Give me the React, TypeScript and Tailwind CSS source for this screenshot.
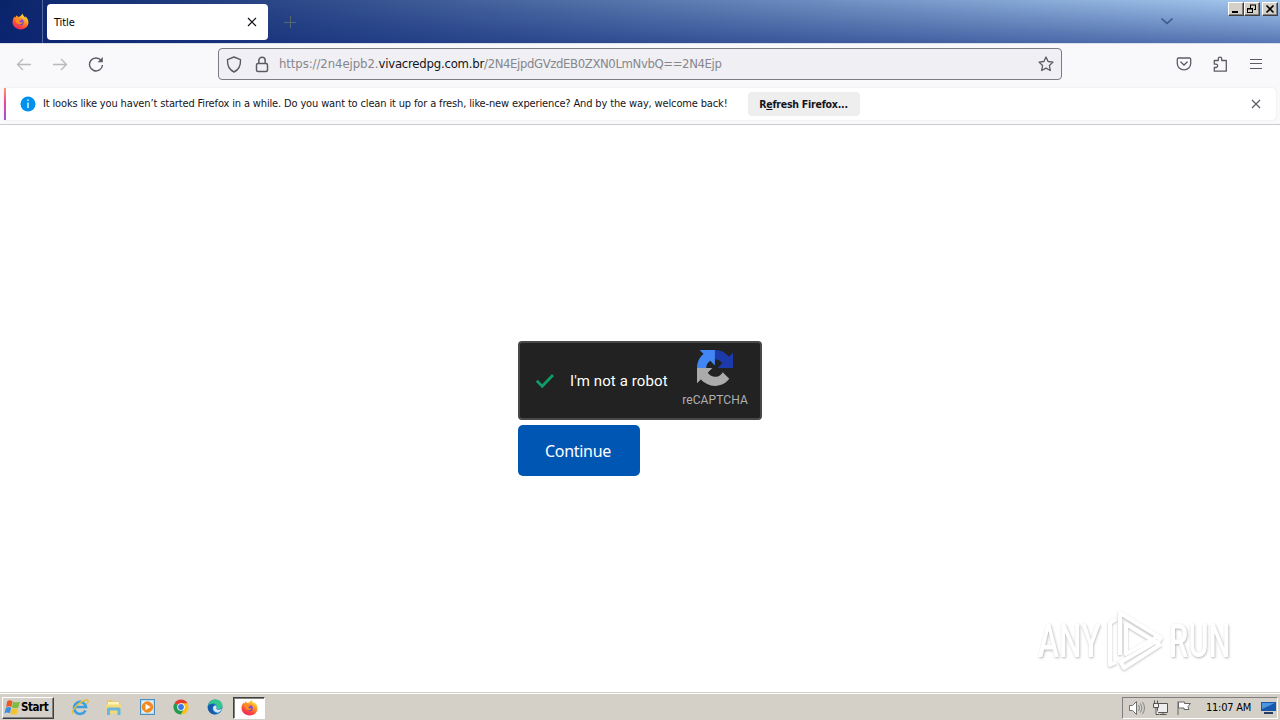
import type { ReactNode } from "react";

const uiFont = "font-['DejaVu_Sans_Condensed','DejaVu_Sans',sans-serif] [font-stretch:condensed]";

function FirefoxLogo({ size }: { size: number }) {
  return (
    <svg width={size} height={size} viewBox="0 0 32 32">
      <defs>
        <linearGradient id="fxBody" x1="0.8" y1="0" x2="0.25" y2="1">
          <stop offset="0" stopColor="#fff04a" />
          <stop offset="0.35" stopColor="#ffa524" />
          <stop offset="0.7" stopColor="#ff4b3a" />
          <stop offset="1" stopColor="#e82268" />
        </linearGradient>
        <linearGradient id="fxCore" x1="0" y1="0" x2="0" y2="1">
          <stop offset="0" stopColor="#9a50f5" />
          <stop offset="1" stopColor="#5b3cc0" />
        </linearGradient>
      </defs>
      <path
        fill="url(#fxBody)"
        d="M20 1c0 4 3 5 5 8 0-1 0-2-.5-3C29 9 31 13 31 18c0 8-7 13-15 13S1 25 1 17c0-5 2-8 4-11 0 1 0 2 .6 3C7 7 8 6 9 4c1 2 2 3 4 3.500C15 7 17 5 20 1z"
      />
      <circle cx="16" cy="17" r="6" fill="url(#fxCore)" />
      <path fill="#ff8a1f" d="M6 10c3-2 7-2 9 1 1 0 3 0 3.500.5-.5 2-3 2.500-4.500 3.500 0 3 4 4 7 2-1 4-5 6-9 4s-6-5-6-11z" />
    </svg>
  );
}

function CaptionButton({ children }: { children: ReactNode }) {
  return (
    <div className="flex h-[14px] w-4 items-center justify-center border border-t-white border-r-[#404040] border-b-[#404040] border-l-white bg-[#d4d0c8] shadow-[inset_-1px_-1px_0_#808080]">
      <svg width="12" height="10" viewBox="0 0 12 10" fill="none" stroke="#000">
        {children}
      </svg>
    </div>
  );
}

function TitleBar() {
  return (
    <header className="flex h-[43px] items-start bg-[linear-gradient(to_bottom,transparent,rgba(10,36,120,0.5)),linear-gradient(to_right,#0a246a,#a6caf0)]">
      <div className="flex h-full w-[43px] items-center justify-center border-r border-[#52689f] pr-[2px]">
        <FirefoxLogo size={17} />
      </div>
      <div className="mt-1 ml-1 flex h-9 w-[221px] items-center justify-between rounded bg-white pr-[10px] pl-[7px]">
        <span className={`pt-[3px] text-[11px] tracking-[-0.1px] text-black ${uiFont}`}>Title</span>
        <svg width="12" height="12" viewBox="0 0 12 12" stroke="#15141a" strokeWidth="1.200">
          <path d="M2 2l8 8M10 2l-8 8" />
        </svg>
      </div>
      <svg className="mt-4 ml-4" width="12" height="12" viewBox="0 0 12 12" stroke="#55666e">
        <path d="M0 6.500h12M6.500 0v12" />
      </svg>
      <svg className="mt-[17px] ml-auto" width="14" height="9" viewBox="0 0 14 9" fill="none" stroke="#3c5685" strokeWidth="1.500">
        <path d="M1.500 1.500l5.500 5 5.500-5" />
      </svg>
      <div className="mt-[2px] mr-[2px] ml-[54px] flex">
        <CaptionButton>
          <path d="M2 8h6" strokeWidth="2" />
        </CaptionButton>
        <CaptionButton>
          <path d="M4 1h6M4.500 1v3M9.500 1v5M8 5.500h2M1 4.500h6M1.500 4v5M6.500 4v5M1 8.500h6M1 5h6" />
        </CaptionButton>
        <div className="w-[2px]" />
        <CaptionButton>
          <path d="M2.500 1.500l7 7M9.500 1.500l-7 7" strokeWidth="1.600" />
        </CaptionButton>
      </div>
    </header>
  );
}

function NavBar() {
  return (
    <nav className="flex h-[45px] items-center border-t border-[#dcdfe8] bg-[#f9f9fb] pb-1">
      <svg className="ml-4" width="16" height="16" viewBox="0 0 16 16" fill="none" stroke="#b9b9bd" strokeWidth="1.300">
        <path d="M15 8.500H1.500M7 3L1.500 8.500 7 14" />
      </svg>
      <svg className="ml-5" width="16" height="16" viewBox="0 0 16 16" fill="none" stroke="#b9b9bd" strokeWidth="1.300">
        <path d="M1 8.500h13.500M9 3l5.500 5.500L9 14" />
      </svg>
      <svg className="ml-5" width="16" height="16" viewBox="0 0 16 16" fill="none" stroke="#5b5b66" strokeWidth="1.400">
        <path d="M13.200 4.500A6.500 6.500 0 1 0 14.500 9" />
        <path d="M14.800 1v5.200H9.600z" fill="#5b5b66" stroke="none" />
      </svg>
      <div className="ml-[114px] flex h-8 w-[844px] items-center rounded border border-[#7c7c85] bg-[#f0f0f4] pr-[7px] pl-[7px]">
        <svg width="16" height="17" viewBox="0 0 16 17" fill="none" stroke="#5b5b66" strokeWidth="1.400">
          <path d="M8 1l6.500 2.700c.3 5.500-1.500 9.800-6.500 12.300C3 13.500 1.200 9.200 1.500 3.700z" strokeLinejoin="round" />
        </svg>
        <svg className="ml-[13px]" width="14" height="17" viewBox="0 0 14 17" fill="none" stroke="#5b5b66" strokeWidth="1.500">
          <rect x="1.500" y="7.500" width="11" height="8" rx="1.500" />
          <path d="M3.800 7.500V4.500a3.200 3.200 0 0 1 6.400 0v3" />
        </svg>
        <span className={`ml-[10px] text-[13px] whitespace-nowrap text-[#86868d] ${uiFont}`}>
          <span className="tracking-[-0.07px]">https://2n4ejpb2.</span>
          <span className="tracking-[-0.22px] text-[#15141a]">vivacredpg.com.br</span>
          <span className="tracking-[-0.39px]">/2N4EjpdGVzdEB0ZXN0LmNvbQ==2N4Ejp</span>
        </span>
        <svg className="ml-auto" width="16" height="16" viewBox="0 0 16 16" fill="none" stroke="#5b5b66" strokeWidth="1.300" strokeLinejoin="round">
          <path d="M8 1l2.100 4.500 4.900.6-3.600 3.400.9 5L8 12.100l-4.300 2.400.9-5L1 6.100l4.900-.6z" />
        </svg>
      </div>
      <svg className="ml-[114px]" width="16" height="16" viewBox="0 0 16 16" fill="none" stroke="#5b5b66" strokeWidth="1.300">
        <path d="M2.500 2h11a1.200 1.200 0 0 1 1.200 1.200V7.500a6.700 6.300 0 0 1-13.400 0V3.200A1.200 1.200 0 0 1 2.500 2z" />
        <path d="M4.800 6L8 9l3.200-3" strokeLinecap="round" />
      </svg>
      <svg className="ml-5" width="16" height="16" viewBox="0 0 16 16" fill="none" stroke="#5b5b66" strokeWidth="1.300" strokeLinejoin="round">
        <path d="M2.300 4.500h4V2.800a1.700 1.700 0 0 1 3.400 0v1.700h4.600v10.700H2.300v-3.700H4a1.600 1.600 0 0 0 0-3.300H2.300z" />
      </svg>
      <svg className="ml-5" width="16" height="16" viewBox="0 0 16 16" stroke="#5b5b66" strokeWidth="1.200">
        <path d="M2 3.500h12M2 7.500h12M2 12.500h12" />
      </svg>
    </nav>
  );
}

function InfoBar() {
  return (
    <div className="h-[37px] border-b border-[#cccccc] bg-[#f9f9fb] pr-1 pl-1">
      <div className="flex h-8 items-center rounded-r bg-white shadow-[0_0_2px_rgba(0,0,0,0.1)]">
        <div className="h-full w-[2px] bg-[linear-gradient(to_bottom,#ff9a6c,#f0419a_45%,#9059d8)]" />
        <svg className="ml-[14px]" width="16" height="16" viewBox="0 0 16 16">
          <circle cx="8" cy="8" r="7.500" fill="#0090ed" />
          <path d="M8 6.500V12M8 3.500v1.600" stroke="#fff" strokeWidth="1.300" />
        </svg>
        <span className={`ml-[7px] w-[705px] text-[11px] tracking-[-0.145px] whitespace-nowrap text-[#15141a] ${uiFont}`}>
          It looks like you haven’t started Firefox in a while. Do you want to clean it up for a fresh, like-new experience? And by the way, welcome back!
        </span>
        <button className={`h-6 w-28 rounded bg-[#eeeeef] pt-px pr-px text-[10.500px] font-bold tracking-[-0.230px] whitespace-nowrap text-[#15141a] ${uiFont}`}>
          R<span className="underline">e</span>fresh Firefox...
        </button>
        <svg className="mr-[14px] ml-auto" width="12" height="12" viewBox="0 0 12 12" stroke="#5b5b66" strokeWidth="1.200">
          <path d="M2 2l8 8M10 2l-8 8" />
        </svg>
      </div>
    </div>
  );
}

function Captcha() {
  return (
    <div className="flex h-[79px] w-[244px] rounded border-2 border-[#484848] bg-[#222222]">
      <svg className="mt-[30px] ml-[15px]" width="20" height="16" viewBox="0 0 20 16" fill="none" stroke="#0f9d67" strokeWidth="2.800">
        <path d="M1.800 7.800l5.400 5.400L18 2" />
      </svg>
      <span className="mt-[27px] ml-[15px] w-[112px] font-['Roboto',sans-serif] text-[15px] tracking-[0.1px] whitespace-nowrap text-white">
        I'm not a robot
      </span>
      <div className="flex w-[66px] flex-col items-center pt-[7px]">
        <svg width="36" height="36" viewBox="0 0 64 64">
          <path
            fill="#1c3aa9"
            d="M64 31.955l-.033-1.370V4.687l-7.160 7.160C50.948 4.674 42.033.093 32.050.093c-10.400 0-19.622 4.960-25.458 12.640l11.736 11.860a15.550 15.550 0 0 1 4.754-5.334c2.050-1.600 4.952-2.906 8.968-2.906.485 0 .860.057 1.135.163 4.976.393 9.288 3.140 11.828 7.124l-8.307 8.307L64 31.953"
          />
          <path
            fill="#4285f4"
            d="M31.862.094l-1.370.033H4.594l7.160 7.160C4.580 13.147 0 22.060 0 32.046c0 10.400 4.960 19.622 12.640 25.458L24.500 45.768a15.550 15.550 0 0 1-5.334-4.754c-1.600-2.050-2.906-4.952-2.906-8.968 0-.485.057-.860.163-1.135.393-4.976 3.140-9.288 7.124-11.828l8.307 8.307L31.860.095"
          />
          <path
            fill="#ababab"
            d="M.001 32.045l.033 1.370v25.898l7.160-7.160c5.860 7.173 14.774 11.754 24.760 11.754 10.400 0 19.622-4.960 25.458-12.640l-11.736-11.860a15.550 15.550 0 0 1-4.754 5.334c-2.050 1.600-4.952 2.906-8.968 2.906-.485 0-.860-.057-1.135-.163-4.976-.393-9.288-3.140-11.828-7.124l8.307-8.307c-10.522.040-22.400.066-27.295-.005"
          />
        </svg>
        <span className="mt-[6px] font-['Roboto',sans-serif] text-xs leading-4 tracking-[0.1px] text-[#b0b0b0]">reCAPTCHA</span>
      </div>
    </div>
  );
}

function Watermark() {
  return (
    <div className="absolute right-[42px] bottom-[20px] flex h-[64px] w-[206px] items-center px-[6px] font-['Roboto',sans-serif] text-[46px] leading-none font-medium text-white [text-shadow:1px_1px_3px_rgba(0,0,0,0.3)]">
      <span className="w-[68px] origin-left scale-x-[0.69] pt-[2px]">ANY</span>
      <svg className="mr-[3px] drop-shadow-[0_1px_1px_rgba(0,0,0,0.25)]" width="60" height="62" viewBox="0 0 60 62" fill="none" stroke="#fff" strokeWidth="4" strokeLinejoin="round">
        <path d="M14 46V4l41 25-4 5-31-19v30l31-17" fill="rgba(0,0,0,0.03)" />
        <path d="M10 10l-6 4v42l6-3" />
        <path d="M55 35L18 59l-3-6 36-21" />
      </svg>
      <span className="w-[62px] origin-left scale-x-[0.67] pt-[2px]">RUN</span>
    </div>
  );
}

function QuickLaunch() {
  return (
    <div className="ml-[17px] flex items-center gap-4">
      <svg width="18" height="18" viewBox="0 0 18 18" fill="none">
        <path d="M14.500 12.500A6 6 0 1 1 15 9H4" stroke="#3ba0dd" strokeWidth="2.600" />
        <path d="M2 16C-1 14 7 4 15 2c3-.5 2.500 2 1 4" stroke="#e8bd3a" strokeWidth="1.300" />
      </svg>
      <svg width="18" height="18" viewBox="0 0 18 18">
        <path d="M2 2h5l1 1.500h7V14H2z" fill="#e9c865" />
        <path d="M3 4h11v5H3z" fill="#fff4b8" />
        <path d="M1 6.500h15l-1 9H2z" fill="#f4d979" />
        <path d="M2 17v-6q0-1.500 1.500-1.500h10.500q1.500 0 1.500 1.500v6h-3v-4.500H5V17z" fill="#69b6dc" />
      </svg>
      <svg width="18" height="18" viewBox="0 0 18 18">
        <rect x="1.500" y="1.500" width="14" height="15" fill="#b9dcf2" stroke="#4a8fc0" />
        <rect x="3.500" y="3.500" width="10" height="11" fill="#fff" />
        <circle cx="8.500" cy="9" r="5.700" fill="#f38a1d" />
        <path d="M6.500 5.800L11.700 9l-5.200 3.200z" fill="#fff" />
      </svg>
      <svg width="16" height="16" viewBox="0 0 16 16">
        <path d="M8 8L1.500 4.200A7.500 7.500 0 0 1 14.500 4.200z" fill="#e33b2e" />
        <path d="M8 8L1.500 4.200A7.500 7.500 0 0 0 8 15.500L11.300 9.800z" fill="#229b4b" />
        <path d="M8 4.200h6.500A7.500 7.500 0 0 1 8 15.500l3.300-6z" fill="#fbc116" />
        <circle cx="8" cy="8" r="3.800" fill="#fff" />
        <circle cx="8" cy="8" r="2.900" fill="#3b78e7" />
      </svg>
      <svg className="ml-[2px]" width="16" height="16" viewBox="0 0 16 16">
        <circle cx="8" cy="8" r="7.500" fill="#1373c8" />
        <path d="M1 6.500C2 2.500 5 .5 8.500.5c4 0 7 3 7 6 0 2.500-2 3.800-4 3.800-1.500 0-2.200-.5-2-1.300C10.500 6 8 4.500 6 4.500S2 5.500 1 6.500z" fill="#36c58b" />
        <path d="M9.400 9.200C9 10 10 10.800 11.500 10.800c1.300 0 2.500-.4 3.500-1.200-.5 2-2 3.500-4 4.200-3-.3-5-2-5-4.500 0-1.500 1-2.800 2.300-2.800 1 0 1.600 1 1.100 2.700z" fill="#d5e8f2" />
        <path d="M6 7c-2 3 0 7 4 8-5 1.500-9-2-9-7 1-2.500 4-3.500 6-2.500z" fill="#1b58a5" />
      </svg>
    </div>
  );
}

function TaskBar() {
  return (
    <footer className="flex h-7 items-center border-t border-[#d4d0c8] bg-[#d4d0c8] shadow-[inset_0_1px_0_#ffffff]">
      <div className="mt-[2px] ml-[2px] flex h-[22px] w-[52px] items-center border border-t-white border-r-[#404040] border-b-[#404040] border-l-white pl-px shadow-[inset_-1px_-1px_0_#808080]">
        <svg width="17" height="17" viewBox="0 0 16 16">
          <path d="M3 2q2.500-1.500 5 0L7 7.500q-2.500-1.500-5 0z" fill="#ea5a27" />
          <path d="M8.600 2.500q2.500 1.300 6.400 0L13.500 8Q10.500 9.200 7.500 8z" fill="#7fbb3c" />
          <path d="M1.800 8.200q2.500-1.500 5 0L5.500 13.500q-2.500-1.500-5 0z" fill="#3b8ee0" />
          <path d="M7.300 8.700q2.500 1.300 6 0L12 14q-3 1.300-6 0z" fill="#f5c22c" />
        </svg>
        <span className={`text-[11.500px] font-bold tracking-[-0.450px] text-black ${uiFont}`}>Start</span>
      </div>
      <QuickLaunch />
      <div className="mt-[2px] ml-[10px] flex h-[22px] w-8 items-center justify-center border border-t-[#404040] border-r-white border-b-white border-l-[#404040] bg-white shadow-[inset_1px_1px_0_#808080]">
        <FirefoxLogo size={17} />
      </div>
      <div className="mt-[2px] mr-[2px] ml-auto flex h-[22px] w-[156px] items-center border border-t-[#808080] border-r-white border-b-white border-l-[#808080] pl-[5px]">
        <svg width="18" height="16" viewBox="0 0 18 16" fill="#fff" stroke="#707070">
          <path d="M1.500 5.500h3l4-4v13l-4-4h-3z" />
          <path d="M10.500 5q2 3 0 6M12.500 3.500q3 4.500 0 9M14.500 2q4 6 0 12" fill="none" stroke="#888" />
        </svg>
        <svg className="ml-[6px]" width="17" height="16" viewBox="0 0 17 16" fill="#eee" stroke="#555">
          <path d="M5.500 3.500h10v9h-10zM7.500 14.500h7M11 12.500v2" />
          <path d="M1.500 3.500h5v4h-5zM2.500.5v3M5.500.5v3M4 7.500v7h3" />
        </svg>
        <svg className="ml-[7px]" width="16" height="16" viewBox="0 0 16 16" fill="#fff" stroke="#666">
          <path d="M2 15V1.500M2.500 2h6v1.500h6l-2.500 3 1 3H8V8H2.500z" />
        </svg>
        <span className={`ml-[14px] w-[54px] pt-px text-[11px] tracking-[-0.240px] whitespace-nowrap text-black ${uiFont}`}>11:07 AM</span>
        <svg width="16" height="16" viewBox="0 0 16 16">
          <path d="M1 2h15v9H1z" fill="#1758ad" />
          <path d="M2 3h13L2 9z" fill="#4c96dd" />
          <path d="M4 12h9v2H4z" fill="#253d65" />
        </svg>
      </div>
    </footer>
  );
}

export default function App() {
  return (
    <div className="flex h-[720px] w-[1280px] flex-col overflow-hidden bg-white">
      <TitleBar />
      <NavBar />
      <InfoBar />
      <main className="relative flex flex-1 flex-col pt-[216px] pl-[518px]">
        <Captcha />
        <button className="mt-[5px] h-[51px] w-[122px] rounded-[5px] bg-[#0056b3] pr-[2px] font-['Noto_Sans',sans-serif] text-base tracking-[-0.3px] text-white">
          Continue
        </button>
        <Watermark />
      </main>
      <TaskBar />
    </div>
  );
}
